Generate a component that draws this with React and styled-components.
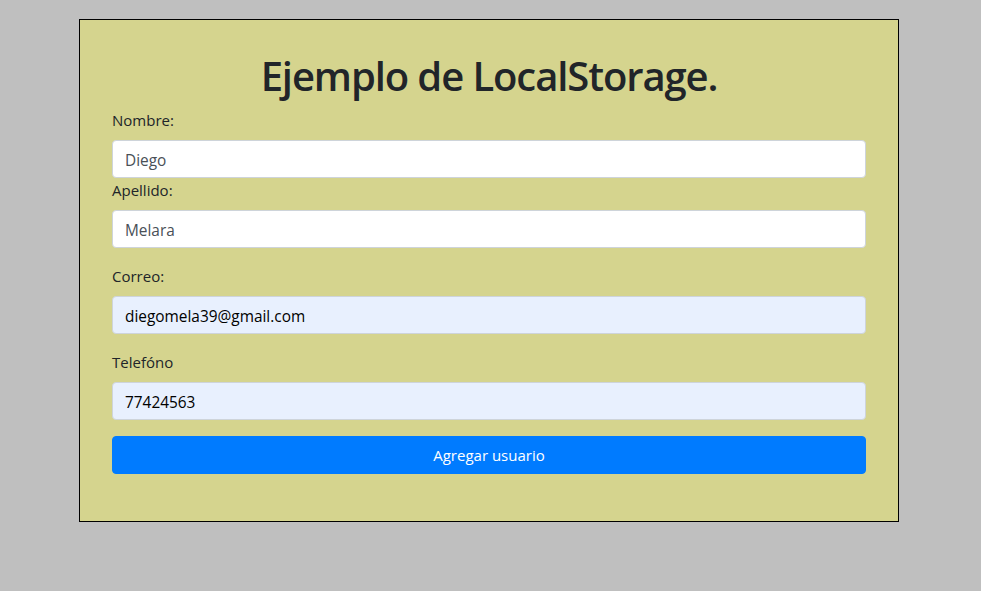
import React from "react";
import styled, { createGlobalStyle } from "styled-components";

const Global = createGlobalStyle`
  html, body {
    margin: 0;
    background: #bfbfbf;
  }
  body {
    font-family: "Open Sans", "Noto Sans", sans-serif;
    color: #212529;
    font-size: 16px;
    line-height: 1.5;
  }
  * { box-sizing: border-box; }
`;

const Page = styled.div`
  padding: 19px 0 70px 79px;
`;

const Card = styled.form`
  width: 820px;
  height: 503px;
  background: #d5d48e;
  border: 1px solid #000;
  padding: 32px 32px 0;
  display: flex;
  flex-direction: column;
`;

const Title = styled.h1`
  margin: 0 0 8px;
  font-size: 40px;
  line-height: 48px;
  font-weight: 600;
  text-align: center;
  color: #212529;
  letter-spacing: -1.1px;
`;

const Group = styled.div`
  margin-bottom: ${(p) => (p.$spaced ? "16px" : "0")};
`;

const Label = styled.label`
  display: block;
  margin-bottom: 8px;
  font-size: 15px;
  line-height: 24px;
  color: #212529;
`;

const Input = styled.input`
  display: block;
  width: 100%;
  height: 38px;
  padding: 7px 12px 5px;
  font-family: inherit;
  font-size: 15.4px;
  line-height: 24px;
  color: ${(p) => (p.$filled ? "#000" : "#495057")};
  background: ${(p) => (p.$filled ? "#e8f0fe" : "#fff")};
  border: 1px solid #ced4da;
  border-radius: 4px;
  outline: none;
`;

const Button = styled.button`
  display: block;
  width: 100%;
  height: 38px;
  padding: 6px 12px;
  font-family: inherit;
  font-size: 15px;
  line-height: 24px;
  color: #fff;
  background: #007bff;
  border: 1px solid #007bff;
  border-radius: 4px;
  cursor: pointer;
`;

export default function App() {
  return (
    <>
      <Global />
      <Page>
        <Card onSubmit={(e) => e.preventDefault()}>
          <Title>Ejemplo de LocalStorage.</Title>
          <Group>
            <Label>Nombre:</Label>
            <Input defaultValue="Diego" />
          </Group>
          <Group $spaced>
            <Label>Apellido:</Label>
            <Input defaultValue="Melara" />
          </Group>
          <Group $spaced>
            <Label>Correo:</Label>
            <Input $filled defaultValue="diegomela39@gmail.com" />
          </Group>
          <Group $spaced>
            <Label>Telefóno</Label>
            <Input $filled defaultValue="77424563" />
          </Group>
          <Button type="submit">Agregar usuario</Button>
        </Card>
      </Page>
    </>
  );
}
